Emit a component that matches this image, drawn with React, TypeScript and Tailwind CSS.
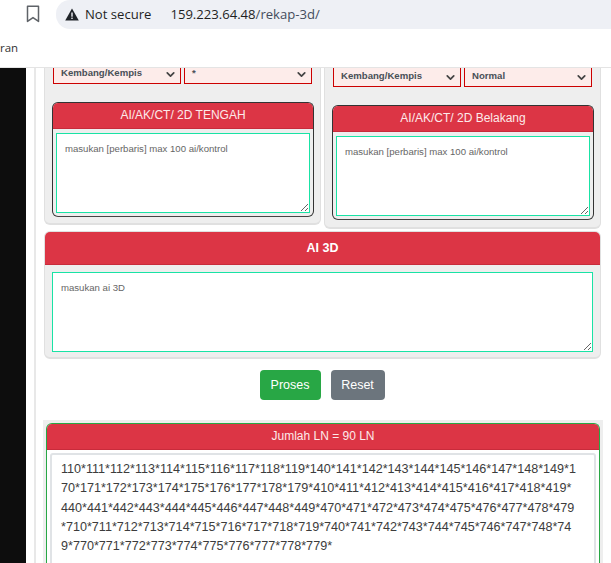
import { ChevronDown } from "lucide-react";

const sans = "font-['Liberation_Sans',Arial,sans-serif]";

function Sel({ label }: { label: string }) {
  return (
    <div className="relative h-[32px] flex-1 border border-[#cc0000] bg-[#fdecea]">
      <span className="absolute left-[7px] top-[13px] text-[9.6px] font-bold leading-[14px] text-[#495057]">{label}</span>
      <ChevronDown className="absolute right-[3px] top-[15px] text-[#444]" size={13} strokeWidth={3.2} />
    </div>
  );
}

function AreaCard({ title, placeholder }: { title: string; placeholder: string }) {
  return (
    <div className="ml-[-1px] mr-[-2px] mt-[18px] rounded-[6px] border border-[#333] border-b-[#444] bg-[#eee]">
      <div className="flex h-[26px] items-center justify-center rounded-t-[5px] border-b border-[#c82b3b] bg-[#dc3545] pb-[2px] text-[12px] text-[#fdeaea]">{title}</div>
      <div className="px-[3px] pt-[4px] pb-[3px]">
        <textarea
          readOnly
          placeholder={placeholder}
          className="block h-[80px] w-full resize-y border border-[#19e3a5] bg-white px-[8px] py-[8px] text-[9.6px] leading-[14px] placeholder:text-[#666] outline-none"
        />
      </div>
    </div>
  );
}

const numberLines = [
  "110*111*112*113*114*115*116*117*118*119*140*141*142*143*144*145*146*147*148*149*1",
  "70*171*172*173*174*175*176*177*178*179*410*411*412*413*414*415*416*417*418*419*",
  "440*441*442*443*444*445*446*447*448*449*470*471*472*473*474*475*476*477*478*479",
  "*710*711*712*713*714*715*716*717*718*719*740*741*742*743*744*745*746*747*748*74",
  "9*770*771*772*773*774*775*776*777*778*779*",
];

export default function App() {
  return (
    <div className={`h-[563px] w-[611px] overflow-hidden bg-white ${sans}`}>
      <header className="relative z-10 h-[68px] border-b border-[#e4e4e4] bg-white">
        <div className="flex h-[29px] items-center">
          <svg className="ml-[26px] mt-[-2px]" width="14" height="18" viewBox="0 0 14 18" fill="none" stroke="#5f6368" strokeWidth="1.5">
            <path d="M1.5 1.2h11v15.2L7 12.6 1.5 16.4z" strokeLinejoin="round" />
          </svg>
          <div className="ml-[16px] flex h-[29px] flex-1 items-center rounded-l-[14px] bg-[#eef0f5] pl-[9px] font-['Open_Sans',sans-serif] text-[13.1px] text-[#1f1f1f]">
            <svg width="14" height="13" viewBox="0 0 14 13">
              <path d="M7 .5 13.8 12.5H.2z" fill="#1f2328" />
              <rect x="6.3" y="4.5" width="1.4" height="4.2" fill="#eef0f5" />
              <rect x="6.3" y="9.6" width="1.4" height="1.4" fill="#eef0f5" />
            </svg>
            <span className="ml-[6px]">Not secure</span>
            <span className="ml-[19px]">
              159.223.64.48<span className="text-[#444c5c]">/rekap-3d/</span>
            </span>
          </div>
        </div>
        <div className="mt-[10px] font-['Open_Sans',sans-serif] text-[11.5px] leading-[18px] text-[#333]">ran</div>
      </header>

      <div className="flex h-[495px]">
        <aside className="w-[26px] shrink-0 bg-[#0d0d0d]" />
        <main className="ml-[8px] flex-1 overflow-hidden border-l-2 border-[#e8e8e8] pl-[8px] pr-[9px]">
          <div className="mt-[-16px] flex gap-[3px]">
            <section className="h-[173px] w-[277px] rounded-b-[6px] border-x border-b-2 border-[#e0e0e0] bg-[#eee] px-[8px]">
              <div className="flex gap-[3px]"><Sel label="Kembang/Kempis" /><Sel label="*" /></div>
              <AreaCard title="AI/AK/CT/ 2D TENGAH" placeholder="masukan [perbaris] max 100 ai/kontrol" />
            </section>
            <section className="h-[177px] w-[277px] rounded-b-[6px] border-x border-b-2 border-[#e0e0e0] bg-[#eee] px-[8px] pt-[3px]">
              <div className="flex gap-[3px]"><Sel label="Kembang/Kempis" /><Sel label="Normal" /></div>
              <AreaCard title="AI/AK/CT/ 2D Belakang" placeholder="masukan [perbaris] max 100 ai/kontrol" />
            </section>
          </div>

          <section className="mt-[2px] h-[128px] w-[557px] rounded-[6px] border-x border-t border-b-2 border-[#e0e0e0] bg-[#eee]">
            <div className="flex h-[33px] items-center justify-center rounded-t-[5px] border-b border-[#c82b3b] bg-[#dc3545] text-[12.5px] font-bold text-white">AI 3D</div>
            <div className="px-[7px] pt-[7px]">
              <textarea
                readOnly
                placeholder="masukan ai 3D"
                className="block h-[80px] w-full resize-y border border-[#19e3a5] bg-white px-[8px] py-[8px] text-[9.6px] leading-[14px] placeholder:text-[#666] outline-none"
              />
            </div>
          </section>

          <div className="mt-[11px] flex w-[557px] justify-center gap-[10px] pr-[1px]">
            <button className="h-[30px] w-[61px] rounded-[4px] bg-[#28a745] text-[12.5px] text-white">Proses</button>
            <button className="h-[30px] w-[54px] rounded-[4px] bg-[#6c757d] text-[12.5px] text-white">Reset</button>
          </div>

          <section className="ml-[-1px] mt-[20px] w-[560px] bg-[#eee] pl-[3px] pr-[3px] pt-[3px]">
            <div className="rounded-t-[6px] border-x border-t border-[#28a745]">
              <div className="flex h-[26px] items-center justify-center rounded-t-[5px] border-b border-[#c82b3b] bg-[#dc3545] pb-[2px] text-[12px] text-[#fdeaea]">Jumlah LN = 90 LN</div>
              <div className="bg-white px-[3px] pt-[3px]">
                <div className="h-[120px] rounded-[3px] border-2 border-[#e0e3e6] bg-white pl-[9px] py-[5px] text-[12.6px] leading-[19.3px] text-[#3c3c3c]">
                  {numberLines.map((line) => (
                    <div key={line} className="whitespace-nowrap">{line}</div>
                  ))}
                </div>
              </div>
            </div>
          </section>
        </main>
      </div>
    </div>
  );
}
